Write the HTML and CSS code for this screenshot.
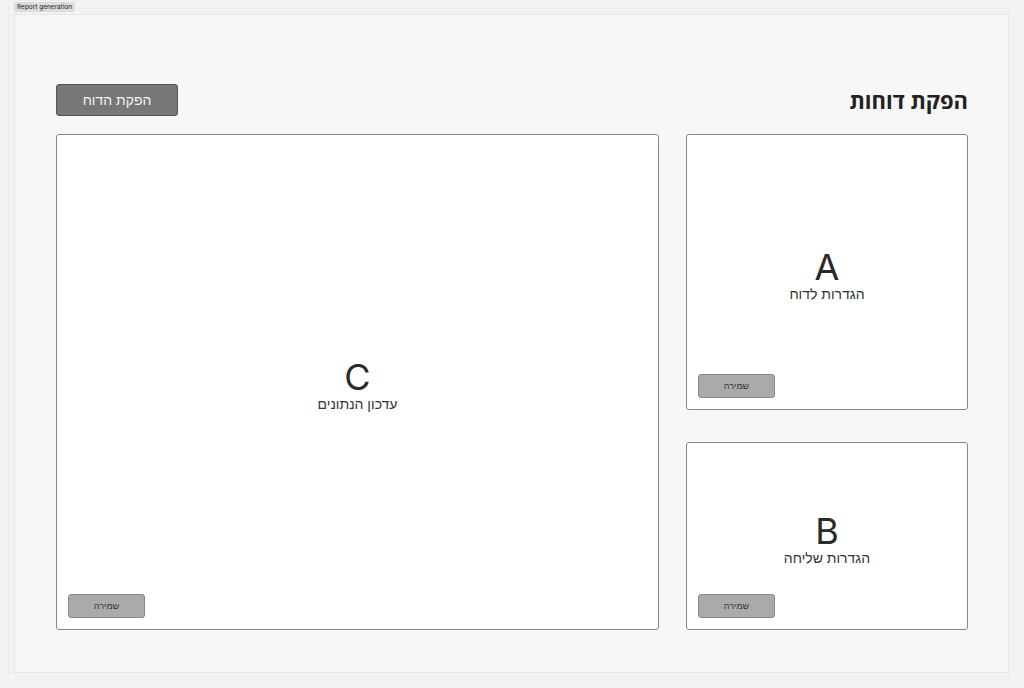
FILE: index.html
```html
<!DOCTYPE html>
<html lang="he" dir="rtl">

<head>
    <meta charset="UTF-8">
    <meta name="viewport" content="width=device-width, initial-scale=1.0">
    <title>Report generation</title>

    <link rel="stylesheet" href="styles.css">

</head>

<body>
    <span class="frame-tag" dir="ltr">Report generation</span>

    <div class="frame">
        <div class="page-head">
            <h1 class="page-title">הפקת דוחות</h1>
            <button type="button" class="btn-main">הפקת הדוח</button>
        </div>

        <div class="panels">
            <div class="panel panel-a">
                <div class="panel-body">
                    <span class="panel-letter">A</span>
                    <span class="panel-label">הגדרות לדוח</span>
                </div>
                <button type="button" class="btn-save">שמירה</button>
            </div>

            <div class="panel panel-b">
                <div class="panel-body">
                    <span class="panel-letter">B</span>
                    <span class="panel-label">הגדרות שליחה</span>
                </div>
                <button type="button" class="btn-save">שמירה</button>
            </div>

            <div class="panel panel-c">
                <div class="panel-body">
                    <span class="panel-letter">C</span>
                    <span class="panel-label">עדכון הנתונים</span>
                </div>
                <button type="button" class="btn-save">שמירה</button>
            </div>
        </div>
    </div>
</body>

</html>
```

FILE: styles.css
```css
html,
body {
    margin: 0;
    height: 100%;
}

body {
    font-family: "Inter", "Liberation Sans", sans-serif;
    color: #333;
    background-color: #f3f3f3;
    background-image:
        linear-gradient(to right, #ededed 1px, transparent 1px),
        linear-gradient(to bottom, #ededed 1px, transparent 1px);
    background-size: 8px 8px;
    padding: 14px 15px 15px 14px;
    box-sizing: border-box;
    position: relative;
}

.frame-tag {
    position: absolute;
    left: 14px;
    top: 2px;
    font-size: 6.5px;
    line-height: 10px;
    padding: 0 3px;
    background: #dcdcdc;
    color: #222;
    border-radius: 2px;
}

.frame {
    height: 659px;
    box-sizing: border-box;
    background: #f7f7f7;
    border: 1px solid #e6e6e6;
    padding: 69px 40px 42px 41px;
    display: flex;
    flex-direction: column;
}

.page-head {
    display: flex;
    justify-content: space-between;
    align-items: center;
    height: 32px;
    margin-bottom: 18px;
}

.page-title {
    margin: 0;
    font-family: "Open Sans", "Liberation Sans", sans-serif;
    font-size: 22px;
    font-weight: 700;
    color: #222;
}

.btn-main {
    width: 122px;
    height: 32px;
    background: #777;
    border: 1px solid #555;
    border-radius: 3px;
    color: #f2f2f2;
    font-family: "Liberation Sans", sans-serif;
    font-size: 14px;
    padding: 0;
}

.panels {
    flex: 1;
    display: grid;
    grid-template-columns: 282px 1fr;
    grid-template-rows: 276px 1fr;
    column-gap: 27px;
    row-gap: 32px;
}

.panel {
    background: #fff;
    border: 1.5px solid #888;
    border-radius: 3px;
    box-sizing: border-box;
    display: flex;
    flex-direction: column;
    align-items: flex-end;
    padding: 0 11px 11px 11px;
}

.panel-a {
    grid-column: 1;
    grid-row: 1;
}

.panel-b {
    grid-column: 1;
    grid-row: 2;
}

.panel-c {
    grid-column: 2;
    grid-row: 1 / 3;
}

.panel-body {
    align-self: stretch;
    flex: 1;
    display: flex;
    flex-direction: column;
    align-items: center;
    justify-content: center;
    padding-top: 42px;
}

.panel-letter {
    font-size: 36px;
    line-height: 36px;
    color: #2a2a2a;
}

.panel-label {
    font-family: "Liberation Sans", sans-serif;
    font-size: 14px;
    line-height: 18px;
    color: #333;
}

.btn-save {
    width: 77px;
    height: 24px;
    background: #aaa;
    border: 1px solid #888;
    border-radius: 3px;
    font-family: "Liberation Sans", sans-serif;
    font-size: 9px;
    color: #333;
    padding: 0;
}
```
